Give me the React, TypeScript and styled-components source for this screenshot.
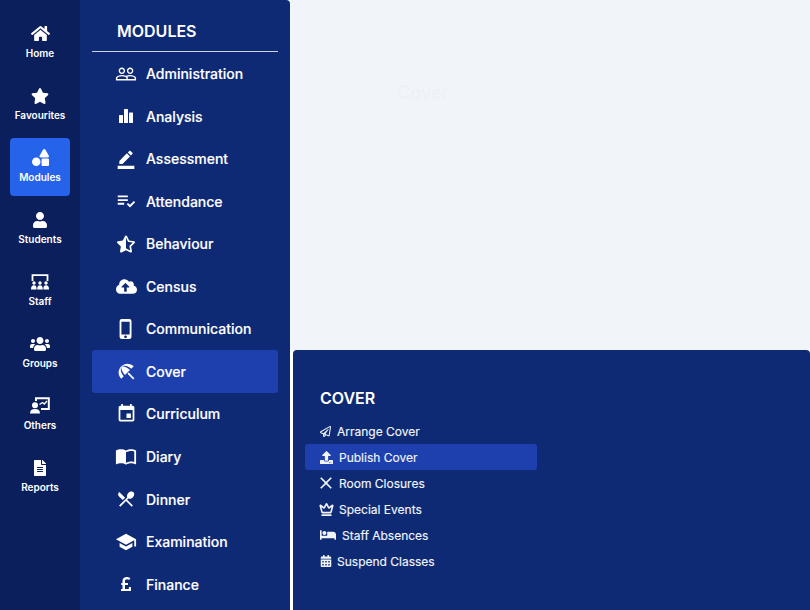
import React from "react";
import styled, { createGlobalStyle } from "styled-components";
import { FaHome, FaStar, FaShapes, FaUser, FaUsers, FaFileAlt, FaCloudUploadAlt, FaPoundSign, FaStarHalfAlt, FaBed, FaCalendarAlt, FaUpload, FaRegPaperPlane } from "react-icons/fa";
import { MdPeopleOutline, MdBorderColor, MdOutlinePhoneIphone, MdEvent, MdImportContacts, MdRestaurantMenu, MdPlaylistAddCheck, MdOutlineClose, MdBeachAccess, MdSchool } from "react-icons/md";
import { LuCrown } from "react-icons/lu";

const Global = createGlobalStyle`
  html, body { margin: 0; padding: 0; height: 100%; overflow: hidden; background: #fff; }
  #root { height: 100%; }
  * { box-sizing: border-box; }
`;

const Page = styled.div`
  display: flex;
  width: 810px;
  height: 610px;
  overflow: hidden;
  font-family: Inter, "Liberation Sans", sans-serif;
  color: #fff;
  background: #fff;
`;

const Rail = styled.nav`
  flex: 0 0 80px;
  background: #0b1f5c;
  padding: 14px 10px 0;
  display: flex;
  flex-direction: column;
  gap: 4px;
`;

const RailItem = styled.div<{ $active?: boolean }>`
  height: 58px;
  padding-bottom: 4px;
  border-radius: 4px;
  background: ${(p) => (p.$active ? "#2563eb" : "transparent")};
  display: flex;
  flex-direction: column;
  align-items: center;
  justify-content: center;
  gap: 3px;
  font-size: 10px;
  line-height: 12px;
  font-weight: 600;
  white-space: nowrap;
`;

const RailIcon = styled.span`
  height: 20px;
  display: flex;
  align-items: center;
  justify-content: center;
`;

const ModulePanel = styled.aside`
  flex: 0 0 210px;
  background: #0f2a75;
  border-top-right-radius: 4px;
  padding: 0 12px;
  overflow: hidden;
`;

const PanelTitle = styled.h2`
  margin: 0;
  height: 52.3px;
  padding: 22px 0 0 25px;
  font-size: 16px;
  line-height: 18px;
  font-weight: 600;
  border-bottom: 1px solid #cbd5e1;
`;

const ModuleRow = styled.div<{ $active?: boolean }>`
  height: 42.55px;
  display: flex;
  align-items: center;
  padding-left: 24px;
  border-radius: 3px;
  background: ${(p) => (p.$active ? "#1e40af" : "transparent")};
  font-size: 14px;
  font-weight: 500;
  -webkit-text-stroke: 0.15px #fff;
  white-space: nowrap;
`;

const ModuleIcon = styled.span`
  flex: 0 0 30px;
  display: flex;
  align-items: center;
`;

const IconBox = styled.span`
  width: 22px;
  margin-left: -1px;
  display: flex;
  justify-content: center;
`;

const Main = styled.main`
  flex: 1;
  display: flex;
  flex-direction: column;
  background: #fff;
`;

const Backdrop = styled.div`
  flex: 0 0 350px;
  padding: 82px 0 0 107px;
  background: #f1f5f9;
  color: #edf1f6;
  font-size: 18px;
  line-height: 22px;
  font-weight: 500;
`;

const SubPanel = styled.section`
  flex: 1;
  margin-left: 3px;
  background: #0f2a75;
  border-radius: 4px 4px 0 0;
  padding: 39px 12px 0;
`;

const SubTitle = styled.h3`
  margin: 0 0 10px 15px;
  font-size: 16px;
  line-height: 19px;
  font-weight: 600;
`;

const SubRow = styled.div<{ $active?: boolean }>`
  width: 232px;
  height: 26px;
  display: flex;
  align-items: center;
  gap: 6px;
  padding-left: 15px;
  border-radius: 3px;
  background: ${(p) => (p.$active ? "#1e40af" : "transparent")};
  font-size: 12px;
  font-weight: 400;
  -webkit-text-stroke: 0.15px #f1f5f9;
  color: #f1f5f9;
  white-space: nowrap;
`;

const rail = [
  { label: "Home", icon: <FaHome size={19} /> },
  { label: "Favourites", icon: <FaStar size={18} /> },
  { label: "Modules", icon: <FaShapes size={17} />, active: true },
  { label: "Students", icon: <FaUser size={16} /> },
  {
    label: "Staff",
    icon: (
      <svg width="18" height="16" viewBox="0 0 18 16" fill="none">
        <path d="M1.5 7V1.2h15V7" stroke="#fff" strokeWidth="1.8" />
        <g fill="#fff">
          <circle cx="3" cy="9" r="1.7" />
          <circle cx="9" cy="9" r="1.7" />
          <circle cx="15" cy="9" r="1.7" />
          <path d="M0 15.5c0-3 1-4.2 3-4.2s2.6 1.2 2.6 4.2zM6.2 15.5c0-3 .8-4.2 2.8-4.2s2.8 1.2 2.8 4.2zM12.4 15.5c0-3 .6-4.2 2.6-4.2s3 1.2 3 4.2z" />
        </g>
      </svg>
    ),
  },
  { label: "Groups", icon: <FaUsers size={20} /> },
  {
    label: "Others",
    icon: (
      <svg width="20" height="17" viewBox="0 0 20 17" fill="none">
        <path d="M6 4V1.2h12.8V12H11" stroke="#fff" strokeWidth="2" />
        <path d="M9.5 7.5l3-2 1.8 1.5L17 4" stroke="#fff" strokeWidth="1.3" />
        <circle cx="5" cy="8.3" r="3" fill="#fff" />
        <path d="M0 16.5c0-3.2 1.6-4.6 5-4.6s5 1.4 5 4.6z" fill="#fff" />
      </svg>
    ),
  },
  { label: "Reports", icon: <FaFileAlt size={16} /> },
];

const modules = [
  { label: "Administration", icon: <MdPeopleOutline size={22} /> },
  {
    label: "Analysis",
    icon: (
      <svg width="14" height="14" viewBox="0 0 14 14" fill="#fff">
        <rect x="0" y="6" width="4" height="8" rx="0.5" />
        <rect x="5" y="0" width="4" height="14" rx="0.5" />
        <rect x="10" y="3.5" width="4" height="10.5" rx="0.5" />
      </svg>
    ),
  },
  { label: "Assessment", icon: <MdBorderColor size={20} /> },
  { label: "Attendance", icon: <MdPlaylistAddCheck size={24} /> },
  { label: "Behaviour", icon: <FaStarHalfAlt size={18} /> },
  { label: "Census", icon: <FaCloudUploadAlt size={21} /> },
  { label: "Communication", icon: <MdOutlinePhoneIphone size={22} /> },
  { label: "Cover", icon: <MdBeachAccess size={21} />, active: true },
  { label: "Curriculum", icon: <MdEvent size={21} /> },
  { label: "Diary", icon: <MdImportContacts size={22} /> },
  { label: "Dinner", icon: <MdRestaurantMenu size={20} /> },
  { label: "Examination", icon: <MdSchool size={22} /> },
  { label: "Finance", icon: <FaPoundSign size={16} /> },
];

const subs = [
  { label: "Arrange Cover", icon: <FaRegPaperPlane size={11} /> },
  { label: "Publish Cover", icon: <FaUpload size={13} />, active: true },
  { label: "Room Closures", icon: <MdOutlineClose size={20} style={{ margin: "0 -3px 0 -4px" }} /> },
  { label: "Special Events", icon: <LuCrown size={15} strokeWidth={2.6} style={{ margin: "0 -1px" }} /> },
  { label: "Staff Absences", icon: <FaBed size={16} /> },
  { label: "Suspend Classes", icon: <FaCalendarAlt size={12} style={{ marginRight: -1 }} /> },
];

export default function App() {
  return (
    <Page>
      <Global />
      <Rail>
        {rail.map((r) => (
          <RailItem key={r.label} $active={r.active}>
            <RailIcon>{r.icon}</RailIcon>
            {r.label}
          </RailItem>
        ))}
      </Rail>
      <ModulePanel>
        <PanelTitle>MODULES</PanelTitle>
        {modules.map((m) => (
          <ModuleRow key={m.label} $active={m.active}>
            <ModuleIcon>
              <IconBox>{m.icon}</IconBox>
            </ModuleIcon>
            {m.label}
          </ModuleRow>
        ))}
      </ModulePanel>
      <Main>
        <Backdrop>Cover</Backdrop>
        <SubPanel>
          <SubTitle>COVER</SubTitle>
          {subs.map((s) => (
            <SubRow key={s.label} $active={s.active}>
              {s.icon}
              {s.label}
            </SubRow>
          ))}
        </SubPanel>
      </Main>
    </Page>
  );
}
